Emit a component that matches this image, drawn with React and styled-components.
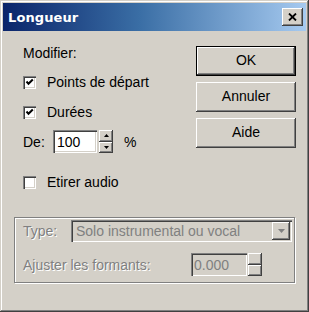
import React from "react";
import styled, { createGlobalStyle } from "styled-components";

const GlobalStyle = createGlobalStyle`
	body {
		margin: 0;
		background: #d4d0c8;
		font-family: "Liberation Sans", Arial, sans-serif;
	}
`;

const face = "#d4d0c8";

const WindowStyled = styled.div`
	width: 309px;
	height: 312px;
	box-sizing: border-box;
	padding: 3px;
	background: ${face};
	box-shadow: inset -1px -1px #404040, inset 1px 1px ${face},
		inset -2px -2px #808080, inset 2px 2px #ffffff;
	display: flex;
	flex-direction: column;
	font-size: 14px;
	color: #000;
`;

const TitleBar = styled.div`
	height: 28px;
	display: flex;
	align-items: center;
	justify-content: space-between;
	padding: 0 3px 0 5px;
	background: linear-gradient(90deg, #0a246a 0%, #3a6ea5 45%, #a6caf0 100%);
`;

const Title = styled.span`
	font-family: "DejaVu Sans", Verdana, sans-serif;
	font-weight: bold;
	font-size: 13px;
	color: #fff;
	letter-spacing: 0.1px;
`;

const CloseButton = styled.div`
	width: 21px;
	height: 18px;
	display: flex;
	align-items: center;
	justify-content: center;
	background: ${face};
	box-shadow: inset -1px -1px #404040, inset 1px 1px #ffffff,
		inset -2px -2px #808080, inset 2px 2px ${face};
`;

const TopSection = styled.div`
	display: flex;
	justify-content: space-between;
	padding: 14px 10px 0 20px;
`;

const LeftColumn = styled.div`
	display: flex;
	flex-direction: column;
`;

const Label = styled.span`
	height: 16px;
	line-height: 16px;
	white-space: nowrap;
	width: ${(p) => (p.$width ? `${p.$width}px` : "auto")};
	flex: none;
	color: ${(p) => (p.$disabled ? "#808080" : "#000")};
	text-shadow: ${(p) => (p.$disabled ? "1px 1px #ffffff" : "none")};
`;

const Row = styled.div`
	display: flex;
	align-items: center;
	margin-top: ${(p) => p.$top || 0}px;
	height: ${(p) => p.$height || 16}px;
`;

const CheckBox = styled.div`
	width: 13px;
	height: 13px;
	flex: none;
	background: #fff;
	box-shadow: inset 1px 1px #808080, inset 2px 2px #404040,
		inset -1px -1px #ffffff, inset -2px -2px ${face};
	margin-right: 11px;
	display: flex;
`;

const Field = styled.div`
	width: ${(p) => p.$width}px;
	height: ${(p) => p.$height || 23}px;
	box-sizing: border-box;
	flex: none;
	display: flex;
	align-items: center;
	padding-left: ${(p) => p.$pad || 4}px;
	background: ${(p) => (p.$disabled ? face : "#fff")};
	color: ${(p) => (p.$disabled ? "#808080" : "#000")};
	box-shadow: inset 1px 1px #808080, inset 2px 2px #404040,
		inset -1px -1px #ffffff, inset -2px -2px ${face};
	white-space: nowrap;
	overflow: hidden;
`;

const Spinner = styled.div`
	display: flex;
	flex-direction: column;
	width: 14px;
	height: 23px;
	margin-left: ${(p) => p.$gap || 1}px;
	flex: none;
`;

const SpinPart = styled.div`
	flex: 1;
	display: flex;
	align-items: center;
	justify-content: center;
	background: ${face};
	box-shadow: inset -1px -1px #404040, inset 1px 1px #ffffff,
		inset -2px -2px #808080;
`;

const Percent = styled.span`
	margin-left: 11px;
`;

const ButtonColumn = styled.div`
	display: flex;
	flex-direction: column;
	gap: 6px;
	margin-top: 1px;
`;

const PushButton = styled.div`
	width: 100px;
	height: 30px;
	box-sizing: border-box;
	display: flex;
	align-items: center;
	justify-content: center;
	background: ${face};
	box-shadow: ${(p) =>
		p.$default
			? `inset 0 0 0 1px #000, inset -2px -2px #404040, inset 2px 2px #ffffff, inset -3px -3px #808080`
			: `inset -1px -1px #404040, inset 1px 1px #ffffff, inset -2px -2px #808080, inset 2px 2px ${face}`};
	padding-bottom: 2px;
`;

const GroupBox = styled.div`
	width: 281px;
	height: 66px;
	box-sizing: border-box;
	margin: 27px 0 0 11px;
	border: 1px solid #808080;
	box-shadow: inset 1px 1px #ffffff, 1px 1px #ffffff;
	padding: 2px 2px 0 8px;
	display: flex;
	flex-direction: column;
`;

const Select = styled.div`
	flex: 1;
	height: 22px;
	display: flex;
	align-items: center;
	justify-content: space-between;
	box-sizing: border-box;
	padding: 2px 2px 2px 5px;
	background: ${face};
	box-shadow: inset 1px 1px #808080, inset 2px 2px #404040,
		inset -1px -1px #ffffff, inset -2px -2px ${face};
`;

const SelectText = styled.span`
	color: #808080;
	white-space: nowrap;
`;

const DropButton = styled.div`
	width: 18px;
	height: 18px;
	display: flex;
	align-items: center;
	justify-content: center;
	background: ${face};
	box-shadow: inset -1px -1px #404040, inset 1px 1px #ffffff,
		inset -2px -2px #808080, inset 2px 2px ${face};
`;

const Check = () => (
	<svg width="13" height="13" viewBox="0 0 13 13">
		<path d="M3.5 5.5 L5.5 7.8 L9.8 3.5" stroke="#000" strokeWidth="2" fill="none" />
	</svg>
);

const Arrow = ({ up, color = "#000" }) => (
	<svg width="5" height="3" viewBox="0 0 5 3">
		<path d={up ? "M2.5 0 L5 3 L0 3 Z" : "M0 0 L5 0 L2.5 3 Z"} fill={color} />
	</svg>
);

const App = () => {
	return (
		<>
			<GlobalStyle />
			<WindowStyled>
				<TitleBar>
					<Title>Longueur</Title>
					<CloseButton>
						<svg width="9" height="8" viewBox="0 0 9 8">
							<path d="M1 0.5 L8 7.5 M8 0.5 L1 7.5" stroke="#000" strokeWidth="1.8" />
						</svg>
					</CloseButton>
				</TitleBar>

				<TopSection>
					<LeftColumn>
						<Label>Modifier:</Label>
						<Row $top={13}>
							<CheckBox>
								<Check />
							</CheckBox>
							<Label>Points de départ</Label>
						</Row>
						<Row $top={14}>
							<CheckBox>
								<Check />
							</CheckBox>
							<Label>Durées</Label>
						</Row>
						<Row $top={10} $height={23}>
							<Label $width={30}>De:</Label>
							<Field $width={44}>100</Field>
							<Spinner $gap={2}>
								<SpinPart>
									<Arrow up />
								</SpinPart>
								<SpinPart>
									<Arrow />
								</SpinPart>
							</Spinner>
							<Percent>%</Percent>
						</Row>
						<Row $top={21}>
							<CheckBox />
							<Label>Etirer audio</Label>
						</Row>
					</LeftColumn>

					<ButtonColumn>
						<PushButton $default>OK</PushButton>
						<PushButton>Annuler</PushButton>
						<PushButton>Aide</PushButton>
					</ButtonColumn>
				</TopSection>

				<GroupBox>
					<Row $height={22}>
						<Label $width={48} $disabled>
							Type:
						</Label>
						<Select>
							<SelectText>Solo instrumental ou vocal</SelectText>
							<DropButton>
								<svg width="7" height="4" viewBox="0 0 7 4">
									<path d="M0 0 L7 0 L3.5 4 Z" fill="#808080" />
								</svg>
							</DropButton>
						</Select>
					</Row>
					<Row $top={11} $height={23}>
						<Label $width={168} $disabled>
							Ajuster les formants:
						</Label>
						<Field $width={56} $disabled $pad={3}>
							0.000
						</Field>
						<Spinner>
							<SpinPart />
							<SpinPart />
						</Spinner>
					</Row>
				</GroupBox>
			</WindowStyled>
		</>
	);
};

export default App;
